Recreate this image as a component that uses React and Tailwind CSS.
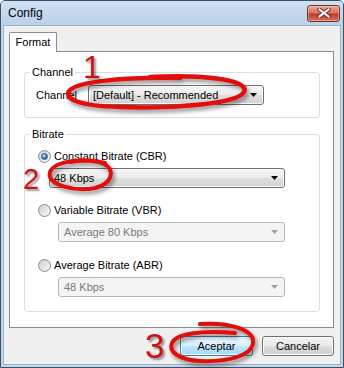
import React from 'react';

function Arrow({ disabled }) {
  return (
    <svg width="7" height="4" viewBox="0 0 7 4">
      <polygon points="0,0 7,0 3.5,4" fill={disabled ? '#a3a3a3' : '#000'} />
    </svg>
  );
}

function Combo({ value, disabled, className }) {
  if (disabled) {
    return (
      <div className={`flex h-[20px] items-center justify-between rounded-[3px] border border-[#b5b8bb] bg-[#f4f4f4] pl-[5px] pr-[6px] text-[#7a7a7a] ${className}`}>
        <span>{value}</span>
        <Arrow disabled />
      </div>
    );
  }
  return (
    <div className={`flex h-[20px] items-center justify-between rounded-[3px] border border-[#707070] bg-[linear-gradient(#f4f4f4,#ececec_50%,#dfdfdf_50%,#d2d2d2)] pl-[4px] pr-[6px] shadow-[inset_0_0_0_1px_#fbfbfb] ${className}`}>
      <span>{value}</span>
      <Arrow />
    </div>
  );
}

function Radio({ checked, label }) {
  return (
    <div className="flex h-[16px] items-center gap-[3px]">
      <span className="flex h-[13px] w-[13px] items-center justify-center rounded-full border border-[#8a8a8a] bg-[linear-gradient(135deg,#cfcfcf,#f8f8f8)]">
        {checked && (
          <span className="h-[7px] w-[7px] rounded-full border border-[#245a86] bg-[radial-gradient(circle_at_35%_30%,#bfe6fb,#3a86c4_55%,#1b4f7d)]" />
        )}
      </span>
      <span>{label}</span>
    </div>
  );
}

function CloseButton() {
  return (
    <div className="flex h-[17px] w-[33px] items-center justify-center rounded-[3px] border border-[#7a2f27] bg-[linear-gradient(#e9a899,#d8705f_45%,#c0392b_55%,#d3735f)] shadow-[inset_0_0_0_1px_rgba(255,255,255,0.35)]">
      <svg width="14" height="10" viewBox="0 0 14 10">
        <path d="M2.5 1.5 L11.5 8.5 M11.5 1.5 L2.5 8.5" stroke="#6b2c24" strokeWidth="4" strokeLinecap="square" />
        <path d="M2.5 1.5 L11.5 8.5 M11.5 1.5 L2.5 8.5" stroke="#f4f4f4" strokeWidth="2.2" strokeLinecap="square" />
      </svg>
    </div>
  );
}

export default function App() {
  return (
    <div className="relative h-[368px] w-[344px] font-['Liberation_Sans',Arial,sans-serif] text-[11px] text-black">
      <div className="flex h-full flex-col rounded-t-[5px] border border-[#3f4d5e] bg-[#c3d7ee]">
        {/* Title bar */}
        <div className="flex h-[24px] shrink-0 items-center justify-between rounded-t-[4px] bg-[linear-gradient(#cfe0f3,#b9d1ea)] pl-[7px] pr-[3px]">
          <span className="text-[12px]">Config</span>
          <CloseButton />
        </div>

        {/* Client area */}
        <div className="mx-[2px] mb-[2px] flex flex-1 flex-col border border-[#9cb2cb] bg-[#f0f0f0] pl-[5px] pt-[6px]">
          <div className="flex">
            <div className="relative z-10 -mb-px flex h-[20px] w-[48px] items-center justify-center rounded-t-[2px] border border-b-0 border-[#898c95] bg-white">
              Format
            </div>
          </div>

          <div className="h-[277px] w-[325px] border border-[#898c95] bg-white pl-[14px]">
            {/* Channel */}
            <fieldset className="mt-[13px] w-[296px] rounded-[3px] border border-[#d5dfe5]">
              <legend className="ml-[5px] px-[2px] leading-[14px]">Channel</legend>
              <div className="flex items-center pb-[12px] pl-[11px] pt-[6px]">
                <span className="w-[52px]">Channel</span>
                <Combo value="[Default] - Recommended" className="w-[176px]" />
              </div>
            </fieldset>

            {/* Bitrate */}
            <fieldset className="mt-[9px] w-[296px] rounded-[3px] border border-[#d5dfe5]">
              <legend className="ml-[5px] px-[2px] leading-[14px]">Bitrate</legend>
              <div className="flex flex-col pb-[14px] pl-[13px] pt-[7px]">
                <Radio checked label="Constant Bitrate (CBR)" />
                <Combo value="48 Kbps" className="ml-[11px] mt-[4px] w-[236px]" />
                <div className="mt-[14px]">
                  <Radio label="Variable Bitrate (VBR)" />
                </div>
                <Combo disabled value="Average 80 Kbps" className="ml-[20px] mt-[4px] w-[227px]" />
                <div className="mt-[15px]">
                  <Radio label="Average Bitrate (ABR)" />
                </div>
                <Combo disabled value="48 Kbps" className="ml-[20px] mt-[4px] w-[227px]" />
              </div>
            </fieldset>
          </div>

          {/* Buttons */}
          <div className="mt-[8px] flex w-[325px] justify-end gap-[9px]">
            <button className="flex h-[20px] w-[73px] items-center justify-center rounded-[3px] border border-[#3c7fb1] bg-[linear-gradient(#eaf6fd,#d9f0fc_50%,#bee6fd_50%,#a7d9f5)] shadow-[inset_0_0_0_1px_#f4fbff]">
              Aceptar
            </button>
            <button className="flex h-[20px] w-[72px] items-center justify-center rounded-[3px] border border-[#707070] bg-[linear-gradient(#f2f2f2,#ebebeb_50%,#dddddd_50%,#cfcfcf)] shadow-[inset_0_0_0_1px_#fcfcfc]">
              Cancelar
            </button>
          </div>
        </div>
      </div>

      {/* Annotations drawn over the dialog */}
      <svg className="pointer-events-none absolute inset-0" width="344" height="368" viewBox="0 0 344 368">
        <defs>
          <filter id="shadow" x="-20%" y="-40%" width="140%" height="180%">
            <feGaussianBlur in="SourceAlpha" stdDeviation="2" />
            <feOffset dx="2" dy="3" result="b" />
            <feComponentTransfer>
              <feFuncA type="linear" slope="0.45" />
            </feComponentTransfer>
            <feMerge>
              <feMergeNode />
              <feMergeNode in="SourceGraphic" />
            </feMerge>
          </filter>
        </defs>
        <g filter="url(#shadow)" fill="none" stroke="#e20a0a" strokeLinecap="round">
          <path d="M150 77 C210 74 250 81 244 92 C238 104 170 109 120 107 C80 106 62 99 70 90 C78 82 120 77 180 78" strokeWidth="4.5" />
          <path d="M105 163 C85 158 55 160 50 172 C46 185 75 192 95 188 C112 184 116 170 104 164 C96 160 80 160 70 162" strokeWidth="4" />
          <path d="M200 324 C230 322 255 330 253 343 C251 357 225 362 200 361 C180 360 168 352 172 343 C176 334 200 330 235 333" strokeWidth="4" />
        </g>
      </svg>
      <span className="pointer-events-none absolute left-[83px] top-[51px] text-[32px] leading-none text-[#cc1212] [text-shadow:2px_2px_2px_rgba(0,0,0,0.4)]">
        1
      </span>
      <span className="pointer-events-none absolute left-[23px] top-[165px] text-[29px] leading-none text-[#cc1212] [text-shadow:2px_2px_2px_rgba(0,0,0,0.4)]">
        2
      </span>
      <span className="pointer-events-none absolute left-[145px] top-[328px] text-[35px] leading-none text-[#cc1212] [text-shadow:2px_2px_2px_rgba(0,0,0,0.4)]">
        3
      </span>
    </div>
  );
}
